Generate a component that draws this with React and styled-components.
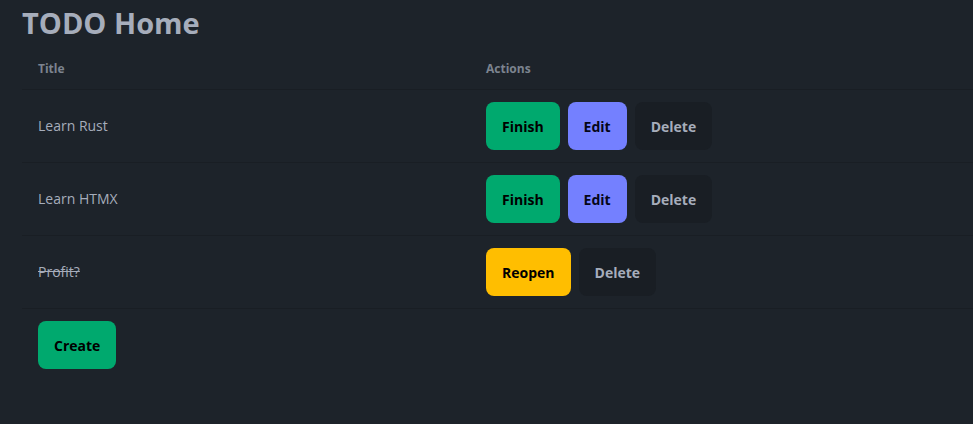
import React from 'react';
import styled, { createGlobalStyle } from 'styled-components';

const todos = [
  { id: 1, title: 'Learn Rust', done: false },
  { id: 2, title: 'Learn HTMX', done: false },
  { id: 3, title: 'Profit?', done: true },
];

const GlobalStyle = createGlobalStyle`
  html, body {
    margin: 0;
    background: #1d232a;
    color: #a6adbb;
    font-family: "Open Sans", "Noto Sans", sans-serif;
  }
`;

const Page = styled.main`
  min-height: 424px;
  padding: 5px 0 0 22px;
  overflow: hidden;
`;

const Heading = styled.h1`
  margin: 0 0 8px;
  font-size: 29px;
  line-height: 36px;
  font-weight: 700;
  color: #a6adbb;
`;

const Table = styled.table`
  width: 1000px;
  border-collapse: collapse;
  font-size: 14px;
  line-height: 20px;
`;

const HeadCell = styled.th`
  text-align: left;
  padding: 12px 16px;
  font-size: 12px;
  line-height: 16px;
  font-weight: 700;
  color: #7c838f;
  border-bottom: 1px solid #191e24;
  width: ${(p) => p.$width || 'auto'};
`;

const Row = styled.tr`
  border-bottom: ${(p) => (p.$last ? 'none' : '1px solid #191e24')};
`;

const Cell = styled.td`
  padding: 12px 16px;
  vertical-align: middle;
`;

const Title = styled.span`
  color: #a6adbb;
  text-decoration: ${(p) => (p.$done ? 'line-through' : 'none')};
`;

const Actions = styled.div`
  display: flex;
  gap: 8px;
`;

const colours = {
  success: ['#00a96e', '#000'],
  primary: ['#7480ff', '#050617'],
  warning: ['#ffbe00', '#000'],
  ghost: ['#191e24', '#a6adbb'],
};

const Button = styled.button`
  height: 48px;
  padding: 0 16px;
  border: none;
  border-radius: 8px;
  font-family: inherit;
  font-size: 14px;
  font-weight: 700;
  cursor: pointer;
  background: ${(p) => colours[p.$kind][0]};
  color: ${(p) => colours[p.$kind][1]};
`;

export default function App() {
  return (
    <>
      <GlobalStyle />
      <Page>
        <Heading>TODO Home</Heading>
        <Table>
          <thead>
            <tr>
              <HeadCell $width="416px">Title</HeadCell>
              <HeadCell>Actions</HeadCell>
            </tr>
          </thead>
          <tbody>
            {todos.map((t) => (
              <Row key={t.id}>
                <Cell>
                  <Title $done={t.done}>{t.title}</Title>
                </Cell>
                <Cell>
                  <Actions>
                    {t.done ? (
                      <Button $kind="warning">Reopen</Button>
                    ) : (
                      <>
                        <Button $kind="success">Finish</Button>
                        <Button $kind="primary">Edit</Button>
                      </>
                    )}
                    <Button $kind="ghost">Delete</Button>
                  </Actions>
                </Cell>
              </Row>
            ))}
            <Row $last>
              <Cell colSpan={2}>
                <Button $kind="success">Create</Button>
              </Cell>
            </Row>
          </tbody>
        </Table>
      </Page>
    </>
  );
}
